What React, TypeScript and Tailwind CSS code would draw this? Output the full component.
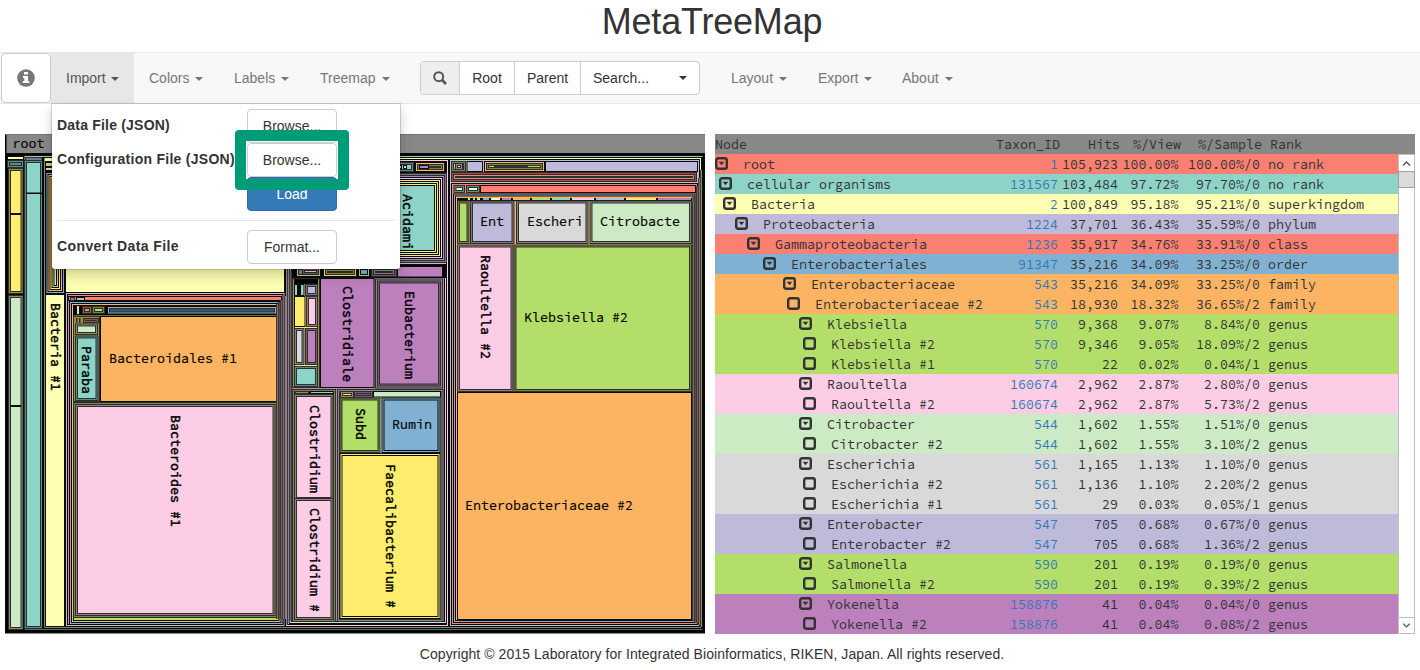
import React from "react";

const MONO = "font-['Source_Code_Pro','Noto_Sans_Mono_CJK_JP','DejaVu_Sans_Mono',monospace]";

const C: Record<string, string> = {
  R: "#fb8072", T: "#8dd3c7", Y: "#ffffb3", P: "#bebada", B: "#80b1d3", O: "#fdb462",
  G: "#b3de69", K: "#fccde5", D: "#d9d9d9", V: "#bc80bd", L: "#ccebc5", W: "#ffed6f",
  b: "#3d5566", v: "#7d567e", g: "#6f8b40", w: "#9a8f40", t: "#558f85", k: "#9a7d8c",
  r: "#94504a", o: "#96693a", p: "#77748c", d: "#858585", l: "#7f9279", x: "#000000",
};

// [left, top, right, bottom, rings from the outside in]
type Box = [number, number, number, number, string];

const boxes: Box[] = [
  [5, 153, 705, 633, "x"],
  // unclassified and viruses
  [7, 156, 24, 160, "Y"],
  [7, 160, 24, 168, "tt"],
  [8, 168, 23.5, 294, "wW"],
  [10, 213, 21, 215, "x"],
  [8, 295, 23.5, 630, "lL"],
  [10, 405, 21, 407, "x"],
  // cellular organisms
  [23.5, 155, 703.5, 630.5, "T"],
  [25, 157, 42.5, 161, "p"],
  [24, 160, 43, 629, "tT"],
  [26, 192.5, 43, 194, "x"],
  [42, 157, 703, 629, "x"],
  // Bacteria
  [43.5, 157, 702, 628.5, "Y"],
  [45, 161, 65, 294, "x"],
  [45, 162, 65, 167, "G"],
  [45, 167, 65, 171, "K"],
  [45.5, 172, 65, 294, "BOWGKD"],
  [45, 294, 65, 627, "Y"],
  [65, 160, 285, 293, "Y"],
  // Bacteroidetes
  [65, 292, 285.5, 627, "PR"],
  [68, 296, 282, 301, "R"],
  [70, 297, 75, 301, "d"],
  [76, 297, 85, 301, "P"],
  [69, 301, 283.5, 625, "BOG"],
  [73, 305, 278, 315.5, "x"],
  [76, 305, 80, 315, "D"],
  [82, 306, 92, 314, "rR"],
  [92, 306, 105, 314, "gG"],
  [107, 306, 277, 314.5, "Bb"],
  [73, 316, 100, 402, "w"],
  [76, 318, 77.5, 323, "w"],
  [79, 318, 80.5, 323, "w"],
  [83, 318, 99, 323, "rr"],
  [75, 323.5, 98, 335, "lL"],
  [75, 335.5, 98.5, 401, "tT"],
  [100, 316, 277, 402, "O"],
  [73, 402, 277.5, 618, "gkK"],
  // Firmicutes and Actinobacteria
  [285, 159, 449, 627, "KP"],
  [288, 162, 447, 173, "x"],
  [390, 162, 414, 172, "tT"],
  [398, 165, 402, 169, "D"],
  [403, 165, 407, 169, "W"],
  [415, 162, 445, 172, "OgG"],
  [419, 165, 429, 169, "V"],
  [288, 173, 447, 263, "pVDWLWT"],
  [289, 264, 447, 624, "DV"],
  [291, 264, 446, 278, "x"],
  [296, 267, 321, 277, "Gd"],
  [302, 268, 319, 275, "vK"],
  [323, 267, 357, 277, "WwW"],
  [358, 267, 370, 277, "GB"],
  [371, 267, 397, 277, "vlL"],
  [397, 266, 443, 277.5, "V"],
  [292, 278, 320, 388, "wW"],
  [294, 279, 318, 284, "x"],
  [294, 284, 304.5, 296, "T"],
  [297, 284, 301, 296, "x"],
  [305, 284, 318, 296, "pP"],
  [294, 296, 305.5, 327, "W"],
  [306, 296, 318, 327, "kK"],
  [294, 328, 304.5, 365, "dD"],
  [305, 328, 318, 365, "vV"],
  [294, 366, 318, 387, "tT"],
  [320, 278, 374.5, 388, "V"],
  [375, 278.5, 443, 388.5, "lvV"],
  [292, 389, 336, 622, "gx"],
  [295, 391, 309, 394, "w"],
  [310, 391, 334, 394, "T"],
  [294, 394, 333.5, 500, "kK"],
  [294, 498, 333.5, 620, "kK"],
  [337, 389, 443.5, 622, "lL"],
  [340, 391, 354, 398, "wW"],
  [354, 391, 373, 398, "vv"],
  [373, 391, 441, 397.5, "L"],
  [339.5, 397.5, 380.5, 453, "gG"],
  [381.5, 397.5, 440.5, 453, "BB"],
  [339.5, 453, 440.5, 619, "WW"],
  // Proteobacteria
  [449, 159, 700, 627, "P"],
  [451, 161, 466, 172, "gG"],
  [455, 163, 463, 170, "kK"],
  [466.5, 161, 483, 172, "P"],
  [484, 161, 545, 172, "OgG"],
  [494, 165, 528, 167, "v"],
  [545, 161, 698, 172, "P"],
  [451, 172, 697, 182, "rRb"],
  [451, 183, 698, 625, "R"],
  [453.5, 185, 465, 193, "tY"],
  [466, 185, 480, 193, "tY"],
  [480, 185, 696, 193, "R"],
  [453, 193.5, 695.5, 623, "BO"],
  [457, 198, 692, 201, "x"],
  [457, 200.5, 469.5, 244, "gG"],
  [470, 200.5, 514.5, 244, "pP"],
  [516, 200.5, 588.5, 244, "dD"],
  [589.5, 200.5, 692, 244, "lL"],
  [457, 244.5, 513.5, 392, "kK"],
  [513.5, 244.5, 692, 392, "gG"],
  [457, 392, 692, 620, "O"],
];

const strip: [number, number, string][] = [
  [468, 2, "W"], [473, 2, "G"], [477, 3, "D"], [483, 6, "B"], [491, 9, "Y"], [502, 9, "V"],
  [513, 17, "O"], [532, 18, "G"], [552, 18, "T"], [572, 22, "K"], [596, 28, "P"],
  [626, 30, "W"], [658, 33, "V"],
];

const rightEdge = ["o", "b", "r", "p", "w"];

const labels: [string, number, number][] = [
  ["root", 12.5, 148], ["Ent", 480, 226], ["Escheri", 527, 226], ["Citrobacte", 600, 226],
  ["Klebsiella #2", 524, 322], ["Enterobacteriaceae #2", 465, 510],
  ["Bacteroidales #1", 109, 363], ["Rumin", 392, 429],
];

const vertical: [string, number, number][] = [
  ["Bacteria #1", 51, 303], ["Paraba", 82, 346], ["Bacteroides #1", 171, 415],
  ["Acidami", 403, 194], ["Clostridiale", 343, 286], ["Eubacterium", 405, 291],
  ["Clostridium", 310, 405], ["Clostridium #", 310, 508], ["Subd", 356, 408],
  ["Faecalibacterium #", 386, 464], ["Raoultella #2", 481, 255],
];

const isMuted = (c: string) => c !== "x" && c === c.toLowerCase();

function Rings({ box }: { box: Box }) {
  const [x1, y1, x2, y2, rings] = box;
  return (
    <>
      {rings.split("").map((c, i) => {
        const w = x2 - x1 - 4 * i;
        const h = y2 - y1 - 4 * i;
        if (w <= 0 || h <= 0) return null;
        const soft = isMuted(c) || (i > 0 && isMuted(rings[i - 1]));
        return (
          <g key={i}>
            <rect x={x1 + 2 * i} y={y1 + 2 * i} width={w} height={h} fill={soft ? "#2e2e2e" : "#0c0c0c"} />
            {w > 2 && h > 2 && (
              <rect x={x1 + 2 * i + 1} y={y1 + 2 * i + 1} width={w - 2} height={h - 2} fill={C[c]} />
            )}
          </g>
        );
      })}
    </>
  );
}

function TreeMap() {
  return (
    <svg viewBox="5 134 700 500" className="h-[500px] w-[700px] shrink-0">
      <rect x="5" y="134" width="700" height="499" fill="#000" />
      <rect x="5" y="633" width="700" height="1" fill="#888" />
      <rect x="6.5" y="134" width="698.5" height="19" fill="#888" />
      <rect x="5" y="134" width="700" height="1" fill="#707070" />
      {boxes.map((b, i) => <Rings key={i} box={b} />)}
      {strip.map(([x, w, c], i) => <rect key={i} x={x} y="198" width={w} height="2" fill={C[c]} />)}
      {rightEdge.map((c, i) => (
        <g key={i}>
          <rect x={692 + 2 * i} y={202 - 8 * i} width="1" height={417 + 10 * i} fill="#3a3a3a" />
          <rect x={693 + 2 * i} y={202 - 8 * i} width="1" height={417 + 10 * i} fill={C[c]} />
        </g>
      ))}
      {["o", "b", "r", "p", "k"].map((c, i) => (
        <g key={i}>
          <rect x={276 + 2 * i} y={304 - 2 * i} width="1" height={315 + 2 * i} fill="#3a3a3a" />
          <rect x={277 + 2 * i} y={304 - 2 * i} width="1" height={315 + 2 * i} fill={C[c]} />
        </g>
      ))}
      {["k", "d", "v"].map((c, i) => (
        <g key={i}>
          <rect x={286 + 2 * i} y={270} width="1" height={355 - 2 * i} fill={C[c]} />
          <rect x={287 + 2 * i} y={270} width="1" height={355 - 2 * i} fill="#3a3a3a" />
        </g>
      ))}
      <g className={`${MONO} text-[13.33px]`} fill="#000">
        {labels.map(([t, x, y]) => (
          <text key={t} x={x} y={y} stroke="#000" strokeWidth="0.15">{t}</text>
        ))}
        {vertical.map(([t, x, y]) => (
          <text key={t} transform={`translate(${x} ${y}) rotate(90)`} stroke="#000" strokeWidth="0.45">{t}</text>
        ))}
      </g>
    </svg>
  );
}

type Row = [number, boolean, string, string, string, string, string, string, string];
const rows: Row[] = [
  [0, true, "root", "1", "105,923", "100.00%", "100.00%/0", "no rank", "bg-[#fb8072]"],
  [4, true, "cellular organisms", "131567", "103,484", "97.72%", "97.70%/0", "no rank", "bg-[#8dd3c7]"],
  [8, true, "Bacteria", "2", "100,849", "95.18%", "95.21%/0", "superkingdom", "bg-[#ffffb3]"],
  [20, true, "Proteobacteria", "1224", "37,701", "36.43%", "35.59%/0", "phylum", "bg-[#bebada]"],
  [32, true, "Gammaproteobacteria", "1236", "35,917", "34.76%", "33.91%/0", "class", "bg-[#fb8072]"],
  [48, true, "Enterobacteriales", "91347", "35,216", "34.09%", "33.25%/0", "order", "bg-[#80b1d3]"],
  [68, true, "Enterobacteriaceae", "543", "35,216", "34.09%", "33.25%/0", "family", "bg-[#fdb462]"],
  [72, false, "Enterobacteriaceae #2", "543", "18,930", "18.32%", "36.65%/2", "family", "bg-[#fdb462]"],
  [84, true, "Klebsiella", "570", "9,368", "9.07%", "8.84%/0", "genus", "bg-[#b3de69]"],
  [88, false, "Klebsiella #2", "570", "9,346", "9.05%", "18.09%/2", "genus", "bg-[#b3de69]"],
  [88, false, "Klebsiella #1", "570", "22", "0.02%", "0.04%/1", "genus", "bg-[#b3de69]"],
  [84, true, "Raoultella", "160674", "2,962", "2.87%", "2.80%/0", "genus", "bg-[#fccde5]"],
  [88, false, "Raoultella #2", "160674", "2,962", "2.87%", "5.73%/2", "genus", "bg-[#fccde5]"],
  [84, true, "Citrobacter", "544", "1,602", "1.55%", "1.51%/0", "genus", "bg-[#ccebc5]"],
  [88, false, "Citrobacter #2", "544", "1,602", "1.55%", "3.10%/2", "genus", "bg-[#ccebc5]"],
  [84, true, "Escherichia", "561", "1,165", "1.13%", "1.10%/0", "genus", "bg-[#d9d9d9]"],
  [88, false, "Escherichia #2", "561", "1,136", "1.10%", "2.20%/2", "genus", "bg-[#d9d9d9]"],
  [88, false, "Escherichia #1", "561", "29", "0.03%", "0.05%/1", "genus", "bg-[#d9d9d9]"],
  [84, true, "Enterobacter", "547", "705", "0.68%", "0.67%/0", "genus", "bg-[#bebada]"],
  [88, false, "Enterobacter #2", "547", "705", "0.68%", "1.36%/2", "genus", "bg-[#bebada]"],
  [84, true, "Salmonella", "590", "201", "0.19%", "0.19%/0", "genus", "bg-[#b3de69]"],
  [88, false, "Salmonella #2", "590", "201", "0.19%", "0.39%/2", "genus", "bg-[#b3de69]"],
  [84, true, "Yokenella", "158876", "41", "0.04%", "0.04%/0", "genus", "bg-[#bc80bd]"],
  [88, false, "Yokenella #2", "158876", "41", "0.04%", "0.08%/2", "genus", "bg-[#bc80bd]"],
];

function Toggle({ open }: { open: boolean }) {
  return (
    <svg viewBox="0 0 13 13" className="mt-[3px] mr-[15px] h-[13px] w-[13px] shrink-0">
      <rect x="1.2" y="1.2" width="10.6" height="10.6" rx="2" fill="none" stroke="#333" strokeWidth="2.4" />
      {open && <path d="M3.600 4.800h5.800L6.500 8.300z" fill="#333" />}
    </svg>
  );
}

function NodeTable() {
  return (
    <div className={`flex h-[500px] w-[700px] shrink-0 flex-col ${MONO} text-[13.33px] leading-[22px] whitespace-pre text-[#333]`}>
      <div className="flex h-5 bg-[#888]">
        <span className="w-[245px]">Node</span>
        <span className="w-[100px] text-right">Taxon_ID</span>
        <span className="w-[60px] text-right">Hits</span>
        <span className="w-[61px] text-right">%/View</span>
        <span className="w-[81px] text-right">%/Sample</span>
        <span className="pl-2">Rank</span>
      </div>
      <div className="flex">
        <div className="w-[683px]">
          {rows.map(([indent, open, name, id, hits, view, sample, rank, bg], i) => (
            <div key={i} className={`flex h-5 ${bg}`}>
              <div className="flex w-[243px] items-start" style={{ paddingLeft: indent }}>
                <Toggle open={open} />
                <span>{name}</span>
              </div>
              <span className="w-[100px] text-right text-[#337ab7]">{id}</span>
              <span className="w-[60px] text-right">{hits}</span>
              <span className="w-[60.5px] text-right">{view}</span>
              <span className="w-[81.500px] text-right">{sample}</span>
              <span className="pl-2">{rank}</span>
            </div>
          ))}
        </div>
        <div className="flex w-[17px] flex-col justify-between border border-[#c0c0c0] bg-white">
          <div className="flex flex-col">
            <svg viewBox="0 0 15 16" className="h-4 w-[15px]"><path d="M4 10.500 7.500 7l3.500 3.500" fill="none" stroke="#505050" strokeWidth="1.3" /></svg>
            <div className="-mx-px h-[17px] border border-[#a0a0a0] bg-[#dcdcdc]" />
          </div>
          <svg viewBox="0 0 15 16" className="h-4 w-[15px] border-t border-[#c0c0c0]"><path d="M4 6l3.500 3.500L11 6" fill="none" stroke="#505050" strokeWidth="1.3" /></svg>
        </div>
      </div>
    </div>
  );
}

function Caret({ className = "" }: { className?: string }) {
  return <span className={`inline-block h-0 w-0 border-x-4 border-t-4 border-x-transparent border-t-current ${className}`} />;
}

function NavItem({ label, width }: { label: string; width: string }) {
  return (
    <div className={`flex h-[50px] items-center pl-[15px] text-[#777] ${width}`}>
      {label}
      <Caret className="ml-[6px] mt-[2px]" />
    </div>
  );
}

const BTN = "flex h-[34px] w-[90px] items-center justify-center rounded border border-[#ccc] bg-white text-[#333]";

function ImportMenu() {
  return (
    <div className="absolute top-[50px] left-0 z-10 h-[167px] w-[350px] rounded-b border border-[#00000026] bg-white bg-clip-padding pt-[5px] pl-[5px] text-[#333] shadow-[0_6px_12px_rgba(0,0,0,0.175)]">
      <div className="grid grid-cols-[190px_90px]">
        <b className="pt-[6px] tracking-[0.2px] whitespace-nowrap">Data File (JSON)</b>
        <div className={BTN}><span className="-mt-px">Browse...</span></div>
        <b className="pt-[6px] tracking-[0.27px] whitespace-nowrap">Configuration File (JSON)</b>
        <div className={BTN}><span className="-mt-px">Browse...</span></div>
        <span />
        <div className="flex h-[34px] w-[90px] items-center justify-center rounded border border-[#2e6da4] bg-[#337ab7] text-white">Load</div>
      </div>
      <div className="mt-[9px] mr-[5px] h-px bg-[#e5e5e5]" />
      <div className="mt-[9px] grid grid-cols-[190px_90px]">
        <b className="pt-[6px] tracking-[0.4px]">Convert Data File</b>
        <div className={BTN}>Format...</div>
      </div>
      <div className="absolute top-[26px] left-[183px] h-[60px] w-[114px] rounded border-[11px] border-[#009b77]" />
    </div>
  );
}

export default function App() {
  return (
    <div className="h-[670px] w-[1420px] overflow-hidden bg-white font-['Liberation_Sans',Arial,sans-serif] text-sm text-[#333]">
      <h1 className="h-[52px] pl-[4px] text-center text-[36px] leading-[43px] tracking-[-0.2px]">MetaTreeMap</h1>
      <nav className="flex h-[52px] border-y border-[#e7e7e7] bg-[#f8f8f8]">
        <div className="ml-px flex h-[50px] w-[50px] items-center justify-center rounded border border-[#ccc] bg-white">
          <svg viewBox="0 0 18 18" className="h-[18px] w-[18px]">
            <circle cx="9" cy="9" r="8.800" fill="#777" />
            <path d="M7 3h4v2.500H7zM6 7h5v5h1.300v2H5.800v-2h1.500V9H6z" fill="#fff" />
          </svg>
        </div>
        <div className="relative h-[50px] w-[83px] bg-[#e7e7e7]">
          <div className="flex h-[50px] items-center pl-[15px] text-[#555]">Import<Caret className="ml-[5px] mt-[2px]" /></div>
          <ImportMenu />
        </div>
        <NavItem label="Colors" width="w-[85px]" />
        <NavItem label="Labels" width="w-[86px]" />
        <NavItem label="Treemap" width="w-[115px]" />
        <div className="mt-[8px] flex h-[34px] w-[280px] items-center overflow-hidden rounded border border-[#ccc] bg-white text-[#333]">
          <div className="flex h-full w-[39px] items-center justify-center border-r border-[#ccc] bg-[#eee]">
            <svg viewBox="0 0 14 14" className="h-[14px] w-[14px]"><circle cx="5.700" cy="5.700" r="4.500" fill="none" stroke="#555" strokeWidth="2" /><path d="m9 9 4 4" stroke="#555" strokeWidth="2.600" /></svg>
          </div>
          <div className="flex h-full w-[55px] items-center justify-center border-r border-[#ccc]">Root</div>
          <div className="flex h-full w-[66px] items-center justify-center border-r border-[#ccc]">Parent</div>
          <div className="flex flex-1 items-center justify-between pr-3 pl-3">Search...<Caret /></div>
        </div>
        <div className="w-4" />
        <NavItem label="Layout" width="w-[87px]" />
        <NavItem label="Export" width="w-[84px]" />
        <NavItem label="About" width="w-[85px]" />
      </nav>
      <main className="flex gap-[10px] pt-[30px] pl-[5px]">
        <TreeMap />
        <NodeTable />
      </main>
      <footer className="pt-[10px] pl-[4px] text-center tracking-[0.065px]">Copyright © 2015 Laboratory for Integrated Bioinformatics, RIKEN, Japan. All rights reserved.</footer>
    </div>
  );
}
